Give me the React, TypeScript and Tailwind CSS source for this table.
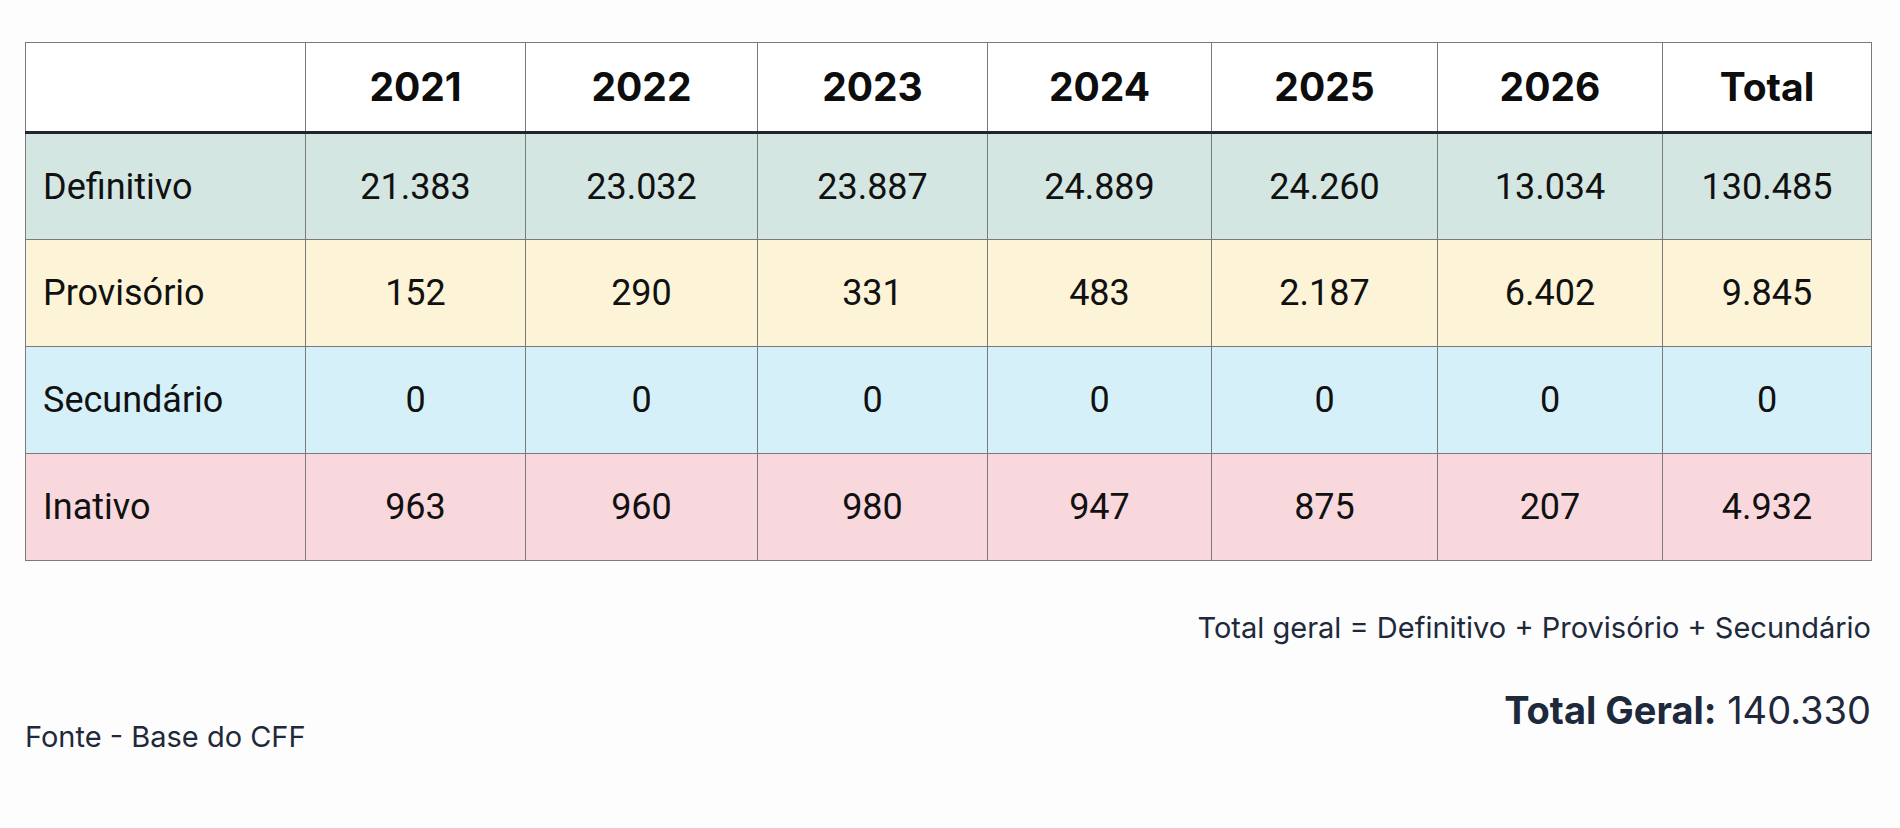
const years = ["2021", "2022", "2023", "2024", "2025", "2026"];

const rows = [
  { label: "Definitivo", bg: "bg-[#d3e6e2]", values: ["21.383", "23.032", "23.887", "24.889", "24.260", "13.034", "130.485"] },
  { label: "Provisório", bg: "bg-[#fdf4d8]", values: ["152", "290", "331", "483", "2.187", "6.402", "9.845"] },
  { label: "Secundário", bg: "bg-[#d5f0f8]", values: ["0", "0", "0", "0", "0", "0", "0"] },
  { label: "Inativo", bg: "bg-[#f9d8dd]", values: ["963", "960", "980", "947", "875", "207", "4.932"] },
];

const colWidths = ["w-[280px]", "w-[220px]", "w-[232px]", "w-[230px]", "w-[224px]", "w-[226px]", "w-[225px]", "w-[209px]"];

export default function App() {
  return (
    <div className="min-h-screen bg-[#fdfdfd] pt-[42px] px-[25px] font-['Inter',sans-serif]">
      <table className="w-[1846px] table-fixed border-collapse border border-[#7a7a7a]">
        <colgroup>
          {colWidths.map((w, i) => (
            <col key={i} className={w} />
          ))}
        </colgroup>
        <thead>
          <tr className="h-[90px] bg-white border-b-[3px] border-b-[#1f2632]">
            <th className="border border-[#7a7a7a] border-b-[3px] border-b-[#1f2632]"></th>
            {years.map((y) => (
              <th
                key={y}
                className="border border-[#7a7a7a] border-b-[3px] border-b-[#1f2632] text-center text-[39px] font-bold text-[#0d0d0d] font-['Inter',sans-serif]"
              >
                {y}
              </th>
            ))}
            <th className="border border-[#7a7a7a] border-b-[3px] border-b-[#1f2632] text-center text-[39px] font-bold text-[#0d0d0d] font-['Inter',sans-serif]">
              Total
            </th>
          </tr>
        </thead>
        <tbody className="font-['Roboto',sans-serif] text-[36px] text-[#111]">
          {rows.map((r) => (
            <tr key={r.label} className={`h-[107px] ${r.bg}`}>
              <td className="border border-[#7a7a7a] pl-[17px] text-left">{r.label}</td>
              {r.values.map((v, i) => (
                <td key={i} className="border border-[#7a7a7a] text-center">
                  {v}
                </td>
              ))}
            </tr>
          ))}
        </tbody>
      </table>

      <div className="w-[1846px] flex justify-between items-start mt-[50px] text-[#1e293b]">
        <p className="mt-[108px] text-[29px] leading-[35px]">Fonte - Base do CFF</p>
        <div className="flex flex-col items-end">
          <p className="text-[29px] leading-[34px]">Total geral = Definitivo + Provisório + Secundário</p>
          <p className="mt-[42px] text-[38px] leading-[46px]">
            <span className="font-bold">Total Geral:</span> 140.330
          </p>
        </div>
      </div>
    </div>
  );
}
